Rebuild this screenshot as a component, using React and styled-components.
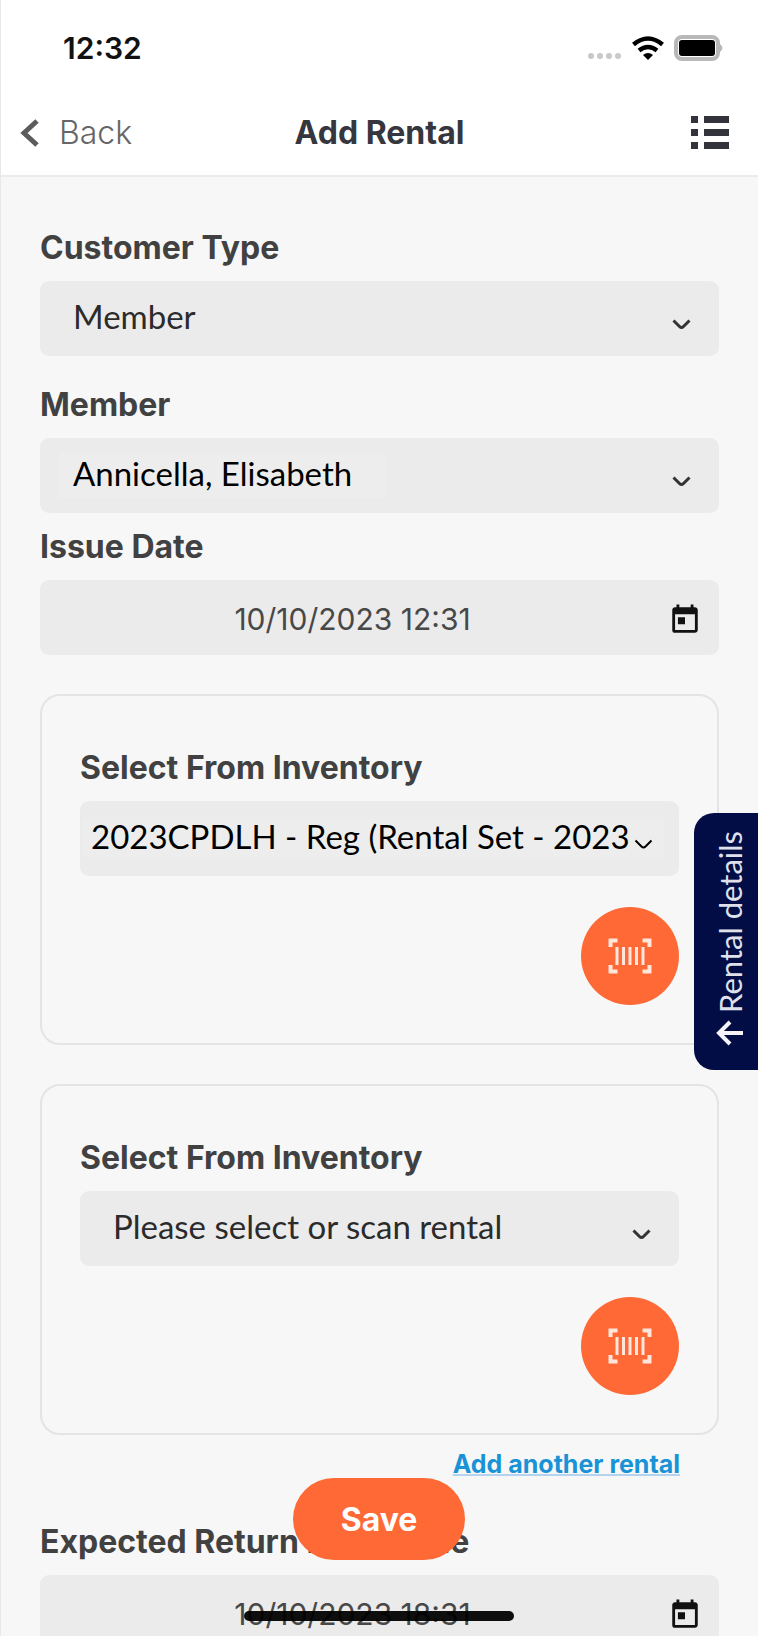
import React, { useState } from 'react';
import styled, { createGlobalStyle } from 'styled-components';
import { MdToday } from 'react-icons/md';

const GlobalStyle = createGlobalStyle`
  * {
    box-sizing: border-box;
  }
  body {
    margin: 0;
    background: #f7f7f7;
    font-family: Inter, sans-serif;
  }
`;

const Screen = styled.div`
  height: 100vh;
  display: flex;
  flex-direction: column;
  overflow: hidden;
  background: #f7f7f7;
  border-left: 1px solid #e8e8e8;
`;

const Top = styled.header`
  flex: none;
  background: #fff;
  border-bottom: 2px solid #ebebea;
`;

const StatusBar = styled.div`
  display: flex;
  align-items: center;
  justify-content: space-between;
  height: 95px;
  padding: 0 33px 0 62px;
`;

const Clock = styled.div`
  font-size: 30px;
  font-weight: 600;
  color: #111;
`;

const StatusIcons = styled.div`
  display: flex;
  align-items: center;
  gap: 10px;
`;

const NavBar = styled.nav`
  display: grid;
  grid-template-columns: 1fr auto 1fr;
  align-items: center;
  height: 80px;
  padding: 0 18px 5px;
`;

const BackButton = styled.button`
  display: flex;
  align-items: center;
  gap: 19px;
  padding: 0;
  border: 0;
  background: none;
  font-family: inherit;
  font-size: 32px;
  font-weight: 300;
  color: #666;
`;

const Title = styled.h1`
  margin: 0;
  font-size: 32px;
  font-weight: 700;
  color: #36363f;
`;

const MenuButton = styled.button`
  display: flex;
  justify-self: end;
  padding: 0 10px 0 0;
  border: 0;
  background: none;
`;

const Form = styled.form`
  flex: 1;
  overflow-y: auto;
  scrollbar-width: none;
  padding: 51px 39px 40px;
`;

const Field = styled.div`
  margin-bottom: ${(p) => p.$gap || 0}px;
`;

const Label = styled.label`
  display: block;
  margin-bottom: 13px;
  font-size: 32px;
  line-height: 40px;
  font-weight: 700;
  color: #414141;
`;

/* control and icon share one grid cell, the icon lies on top */
const Control = styled.div`
  display: grid;
  align-items: center;
  height: 75px;
  border-radius: 9px;
  background: #ebebeb;

  > * {
    grid-area: 1 / 1;
  }
  > svg {
    justify-self: end;
    pointer-events: none;
  }
`;

const Select = styled.select`
  appearance: none;
  width: 100%;
  height: 75px;
  padding: 0 ${(p) => (p.$wide ? '48px 5px 11px' : '60px 5px 33px')};
  border: 0;
  background: none;
  font-family: Lato, sans-serif;
  font-size: 33px;
  color: ${(p) => (p.$dark ? '#000' : '#2b2b2b')};
`;

/* filled-in values sit on a slightly lighter patch */
const FilledSelect = styled(Select)`
  background: linear-gradient(#ededed, #ededed) no-repeat;
  background-position: ${(p) => (p.$wide ? '2px 18px' : '19px 14px')};
  background-size: ${(p) => (p.$wide ? 'calc(100% - 17px) 38px' : '326px 46px')};
`;

const Chevron = styled.svg`
  margin: 12px ${(p) => (p.$wide ? 26 : 28)}px 0 0;
`;

const DateInput = styled.input`
  width: 100%;
  height: 75px;
  padding: 2px 54px 0 0;
  border: 0;
  background: none;
  font-family: inherit;
  font-size: 30px;
  text-align: center;
  color: #484848;
`;

const TodayIcon = styled(MdToday)`
  width: 34px;
  height: 34px;
  margin: 4px 17px 0 0;
  color: #111;
`;

const Card = styled.section`
  margin-bottom: 39px;
  padding: 52px 38px 38px;
  border: 2px solid #e4e4e4;
  border-radius: 20px;
`;

const ScanRow = styled.div`
  display: flex;
  justify-content: flex-end;
  margin-top: 31px;
`;

const ScanButton = styled.button`
  display: flex;
  align-items: center;
  justify-content: center;
  width: 98px;
  height: 98px;
  padding: 0;
  border: 0;
  border-radius: 50%;
  background: #ff6935;
`;

const LinkRow = styled.div`
  display: flex;
  justify-content: flex-end;
  height: 74px;
  margin-top: -26px;
  padding-right: 39px;
`;

const AddLink = styled.a`
  font-size: 25px;
  line-height: 32px;
  font-weight: 700;
  color: #1993d6;
  text-decoration: underline;
  text-decoration-color: #b5d3ee;
  text-decoration-thickness: 2px;
  text-underline-offset: 1px;
  text-decoration-skip-ink: none;
`;

const SideTab = styled.button`
  position: fixed;
  top: 813px;
  right: 0;
  display: flex;
  flex-direction: column;
  align-items: center;
  justify-content: center;
  gap: 7px;
  width: 64px;
  height: 257px;
  padding: 0 0 6px 8px;
  border: 0;
  border-radius: 20px 0 0 20px;
  background: #020d46;
  color: #dfe0ea;
`;

const SideText = styled.span`
  writing-mode: vertical-rl;
  transform: rotate(180deg);
  font-family: Lato, sans-serif;
  font-size: 31px;
  line-height: 40px;
`;

const SaveButton = styled.button`
  position: fixed;
  bottom: 76px;
  left: 50%;
  transform: translateX(-50%);
  width: 172px;
  height: 82px;
  padding: 0;
  border: 0;
  border-radius: 41px;
  background: #ff6935;
  font-family: inherit;
  font-size: 32px;
  font-weight: 700;
  color: #fff;
`;

const HomeIndicator = styled.div`
  position: fixed;
  bottom: 15px;
  left: 50%;
  transform: translateX(-50%);
  width: 270px;
  height: 10px;
  border-radius: 5px;
  background: rgba(0, 0, 0, 0.94);
`;

const SignalDots = () => (
  <svg width="34" height="24" viewBox="0 0 34 24" fill="#c8c8c8">
    <circle cx="3" cy="20" r="3" />
    <circle cx="12" cy="20" r="3" />
    <circle cx="21" cy="20" r="3" />
    <circle cx="30" cy="20" r="3" />
  </svg>
);

const Wifi = () => (
  <svg width="32" height="24" viewBox="0 0 32 24" fill="none" stroke="#000" strokeWidth="4.500">
    <path d="M1.500 8.500 Q16 -3.500 30.500 8.500" />
    <path d="M7 14.500 Q16 7.500 25 14.500" />
    <path d="M11 19 Q16 15 21 19 L16 24 Z" fill="#000" stroke="none" />
  </svg>
);

const Battery = () => (
  <svg width="51" height="26" viewBox="0 0 51 26">
    <rect x="2" y="2" width="42" height="22" rx="6" fill="#fff" stroke="#b8b8b8" strokeWidth="4" />
    <rect x="5" y="5" width="36" height="16" rx="3" fill="#000" />
    <path d="M46 9 Q51 13 46 17 Z" fill="#b8b8b8" />
  </svg>
);

const BackIcon = () => (
  <svg width="21" height="30" viewBox="0 0 21 30" fill="none" stroke="#5c5c5c" strokeWidth="5">
    <path d="M18 3 L5 15 L18 27" />
  </svg>
);

const ListIcon = () => (
  <svg width="40" height="34" viewBox="0 0 40 34" fill="#33333b">
    <rect x="1" width="7" height="7" />
    <rect x="14" width="25" height="7" />
    <rect x="1" y="13" width="7" height="7" />
    <rect x="14" y="13" width="25" height="7" />
    <rect x="1" y="26" width="7" height="7" />
    <rect x="14" y="26" width="25" height="7" />
  </svg>
);

const BarcodeIcon = () => (
  <svg width="44" height="36" viewBox="0 0 44 36" fill="none" stroke="#ffe6dd">
    <path
      d="M2.500 9 V2.500 H9.500 M34.500 2.500 H41.500 V9 M41.500 27 V33.500 H34.500 M9.500 33.500 H2.500 V27"
      strokeWidth="4"
    />
    <path d="M9 9 V27 M15.500 9 V27 M22 9 V27 M28.500 9 V27 M35 9 V27" strokeWidth="3" />
  </svg>
);

const ArrowIcon = () => (
  <svg width="28" height="26" viewBox="0 0 28 26" fill="none" stroke="#f4f4f8" strokeWidth="4">
    <path d="M27 13 H3 M14 2 L3 13 L14 24" />
  </svg>
);

const SelectField = ({ id, label, options, gap, wide, filled }) => {
  const Box = filled ? FilledSelect : Select;
  return (
    <Field $gap={gap}>
      <Label htmlFor={id}>{label}</Label>
      <Control>
        <Box id={id} $wide={wide} $dark={filled}>
          {options.map((o) => (
            <option key={o}>{o}</option>
          ))}
        </Box>
        <Chevron $wide={wide} width="19" height="11" viewBox="0 0 19 11" fill="none">
          <path
            d="M1.500 1.500 L7.500 7.500 Q9.500 9.500 11.500 7.500 L17.500 1.500"
            stroke={wide ? '#000' : '#333'}
            strokeWidth={wide ? 2 : 3}
          />
        </Chevron>
      </Control>
    </Field>
  );
};

const DateField = ({ id, label, initial, gap }) => {
  const [value, setValue] = useState(initial);
  return (
    <Field $gap={gap}>
      <Label htmlFor={id}>{label}</Label>
      <Control>
        <DateInput id={id} value={value} onChange={(e) => setValue(e.target.value)} />
        <TodayIcon />
      </Control>
    </Field>
  );
};

const InventoryCard = (props) => (
  <Card>
    <SelectField label="Select From Inventory" {...props} />
    <ScanRow>
      <ScanButton type="button" aria-label="Scan">
        <BarcodeIcon />
      </ScanButton>
    </ScanRow>
  </Card>
);

export default function App() {
  return (
    <Screen>
      <GlobalStyle />
      <Top>
        <StatusBar>
          <Clock>12:32</Clock>
          <StatusIcons>
            <SignalDots />
            <Wifi />
            <Battery />
          </StatusIcons>
        </StatusBar>
        <NavBar>
          <BackButton>
            <BackIcon />
            Back
          </BackButton>
          <Title>Add Rental</Title>
          <MenuButton aria-label="Menu">
            <ListIcon />
          </MenuButton>
        </NavBar>
      </Top>
      <Form>
        <SelectField id="type" label="Customer Type" options={['Member']} gap={29} />
        <SelectField id="member" label="Member" options={['Annicella, Elisabeth']} gap={14} filled />
        <DateField id="issue" label="Issue Date" initial="10/10/2023 12:31" gap={39} />
        <InventoryCard id="item1" options={['2023CPDLH - Reg (Rental Set - 2023']} wide filled />
        <InventoryCard id="item2" options={['Please select or scan rental']} />
        <LinkRow>
          <AddLink href="#add">Add another rental</AddLink>
        </LinkRow>
        <DateField id="return" label="Expected Return Date/Time" initial="10/10/2023 18:31" />
      </Form>
      <SideTab>
        <SideText>Rental details</SideText>
        <ArrowIcon />
      </SideTab>
      <SaveButton>Save</SaveButton>
      <HomeIndicator />
    </Screen>
  );
}
